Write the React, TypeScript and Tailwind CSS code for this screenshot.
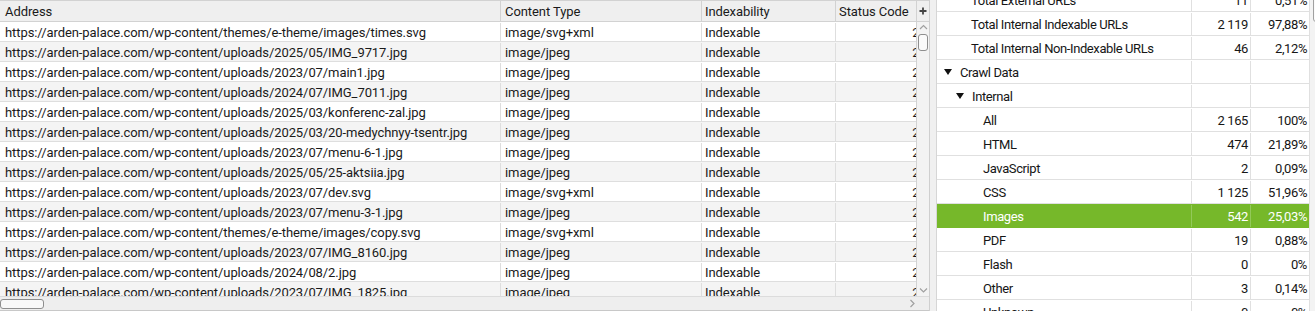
import React from "react";

const BASE = "https://arden-palace.com/wp-content/";
const ROWS: [string, string][] = [
  ["themes/e-theme/images/times.svg", "image/svg+xml"],
  ["uploads/2025/05/IMG_9717.jpg", "image/jpeg"],
  ["uploads/2023/07/main1.jpg", "image/jpeg"],
  ["uploads/2024/07/IMG_7011.jpg", "image/jpeg"],
  ["uploads/2025/03/konferenc-zal.jpg", "image/jpeg"],
  ["uploads/2025/03/20-medychnyy-tsentr.jpg", "image/jpeg"],
  ["uploads/2023/07/menu-6-1.jpg", "image/jpeg"],
  ["uploads/2025/05/25-aktsiia.jpg", "image/jpeg"],
  ["uploads/2023/07/dev.svg", "image/svg+xml"],
  ["uploads/2023/07/menu-3-1.jpg", "image/jpeg"],
  ["themes/e-theme/images/copy.svg", "image/svg+xml"],
  ["uploads/2023/07/IMG_8160.jpg", "image/jpeg"],
  ["uploads/2024/08/2.jpg", "image/jpeg"],
  ["uploads/2023/07/IMG_1825.jpg", "image/jpeg"],
];

type SRow = { label: string; level: number; tri?: boolean; n?: string; p?: string; sel?: boolean };
const SUMMARY: SRow[] = [
  { label: "Total External URLs", level: 1, n: "11", p: "0,51%" },
  { label: "Total Internal Indexable URLs", level: 1, n: "2 119", p: "97,88%" },
  { label: "Total Internal Non-Indexable URLs", level: 1, n: "46", p: "2,12%" },
  { label: "Crawl Data", level: 0, tri: true },
  { label: "Internal", level: 1, tri: true },
  { label: "All", level: 2, n: "2 165", p: "100%" },
  { label: "HTML", level: 2, n: "474", p: "21,89%" },
  { label: "JavaScript", level: 2, n: "2", p: "0,09%" },
  { label: "CSS", level: 2, n: "1 125", p: "51,96%" },
  { label: "Images", level: 2, n: "542", p: "25,03%", sel: true },
  { label: "PDF", level: 2, n: "19", p: "0,88%" },
  { label: "Flash", level: 2, n: "0", p: "0%" },
  { label: "Other", level: 2, n: "3", p: "0,14%" },
  { label: "Unknown", level: 2, n: "0", p: "0%" },
];

function Tri() {
  return (
    <svg width="8" height="6" viewBox="0 0 8 6" className="shrink-0">
      <polygon points="0,0 8,0 4,6" fill="#111" />
    </svg>
  );
}

function Chevron({ dir }: { dir: "up" | "down" | "right" }) {
  const d =
    dir === "up" ? "M1 5 L4.5 1.5 L8 5" : dir === "down" ? "M1 1.5 L4.5 5 L8 1.5" : "M1.5 1 L5 4.5 L1.5 8";
  const size = dir === "right" ? { w: 7, h: 9 } : { w: 9, h: 7 };
  return (
    <svg width={size.w} height={size.h} viewBox={`0 0 ${size.w} ${size.h}`}>
      <path d={d} fill="none" stroke="#a0a0a0" strokeWidth="1.2" />
    </svg>
  );
}

export default function App() {
  return (
    <div className="flex w-[1315px] h-[311px] overflow-hidden bg-[#f0f0f0] font-['Roboto',sans-serif] text-[13px] leading-none text-[#1a1a1a]">
      {/* Left panel */}
      <div className="flex flex-col w-[930px] h-full border-r border-[#cfcfcf] bg-white tracking-[-0.08px]">
        <div className="flex flex-1 min-h-0">
          <div className="w-[916px] overflow-hidden">
            <div className="w-[937px]">
              <div className="flex h-[22px] bg-[#efefef] border-t border-b border-[#d2d2d2]">
                <div className="w-[501px] pl-[5px] flex items-center border-r border-[#d2d2d2]">Address</div>
                <div className="w-[201px] pl-[4px] flex items-center border-r border-[#d2d2d2]">Content Type</div>
                <div className="w-[134px] pl-[3px] flex items-center border-r border-[#d2d2d2]">Indexability</div>
                <div className="w-[101px] pl-[3px] flex items-center">Status Code</div>
              </div>
              {ROWS.map(([path, type], i) => (
                <div
                  key={i}
                  className={`flex h-[20px] pt-px border-b border-[#dedede] ${i % 2 === 1 ? "bg-[#f4f4f4]" : "bg-white"}`}
                >
                  <div className="w-[501px] pl-[5px] flex items-center border-r border-[#dedede] whitespace-nowrap overflow-hidden">
                    {BASE + path}
                  </div>
                  <div className="w-[201px] pl-[4px] flex items-center border-r border-[#dedede]">{type}</div>
                  <div className="w-[134px] pl-[3px] flex items-center border-r border-[#dedede]">Indexable</div>
                  <div className="w-[101px] pr-[3px] flex items-center justify-end">200</div>
                </div>
              ))}
            </div>
          </div>
          {/* vertical scrollbar */}
          <div className="w-[13px] flex flex-col border-l border-[#d2d2d2] bg-[#f3f3f3]">
            <div className="h-[22px] flex items-center justify-center bg-[#efefef] border-t border-b border-[#d2d2d2]">
              <svg width="8" height="8" viewBox="0 0 8 8">
                <path d="M4 0.5 V7.5 M0.5 4 H7.5" stroke="#444" strokeWidth="1.8" />
              </svg>
            </div>
            <div className="flex-1 flex flex-col items-center pt-[2px] pb-[2px]">
              <Chevron dir="up" />
              <div className="mt-[3px] w-[10px] h-[17px] rounded-[3px] border border-[#8e8e8e] bg-[#fafafa]" />
              <div className="flex-1" />
              <Chevron dir="down" />
            </div>
          </div>
        </div>
        {/* horizontal scrollbar */}
        <div className="h-[15px] flex items-center bg-[#eeeeee] border-t border-[#dcdcdc] border-b border-b-[#c8c8c8]">
          <div className="w-[44px] h-[10px] rounded-[3px] border border-[#8e8e8e] bg-[#f8f8f8]" />
          <div className="flex-1" />
          <div className="w-[20px] flex justify-start">
            <Chevron dir="right" />
          </div>
        </div>
      </div>

      {/* splitter */}
      <div className="w-[6px] bg-[#f0f0f0]" />

      {/* Right panel */}
      <div className="flex flex-1 bg-white border-l border-[#d6d6d6] tracking-[-0.4px] text-[#161616]">
        <div className="w-[372px] overflow-hidden">
          <div className="-mt-[12px]">
            {SUMMARY.map((r, i) => (
              <div
                key={i}
                className={`flex h-[24px] pt-px border-b ${r.sel ? "bg-[#76b82a] text-white border-[#76b82a]" : "border-[#e0e0e0]"}`}
              >
                <div
                  className={`w-[255px] flex items-center border-r ${r.sel ? "border-[#93c95a]" : "border-[#e0e0e0]"} ${
                    r.level === 0 ? "pl-[7px]" : r.level === 1 ? (r.tri ? "pl-[19px]" : "pl-[34px]") : "pl-[46px]"
                  }`}
                >
                  {r.tri && (
                    <span className="mr-[8px] flex items-center">
                      <Tri />
                    </span>
                  )}
                  <span>{r.label}</span>
                </div>
                <div
                  className={`w-[59px] pr-[2px] flex items-center justify-end border-r ${
                    r.sel ? "border-[#93c95a]" : "border-[#e0e0e0]"
                  }`}
                >
                  {r.n}
                </div>
                <div className="w-[58px] pr-[2px] flex items-center justify-end">{r.p}</div>
              </div>
            ))}
          </div>
        </div>
        {/* right scrollbar (clipped) */}
        <div className="flex-1 relative overflow-hidden bg-[#f3f3f3] border-l border-[#e0e0e0]">
          <div className="absolute left-[3px] -top-[10px] w-[10px] h-[32px] rounded-[3px] border border-[#a0a0a0] bg-[#fafafa]" />
        </div>
      </div>
    </div>
  );
}
